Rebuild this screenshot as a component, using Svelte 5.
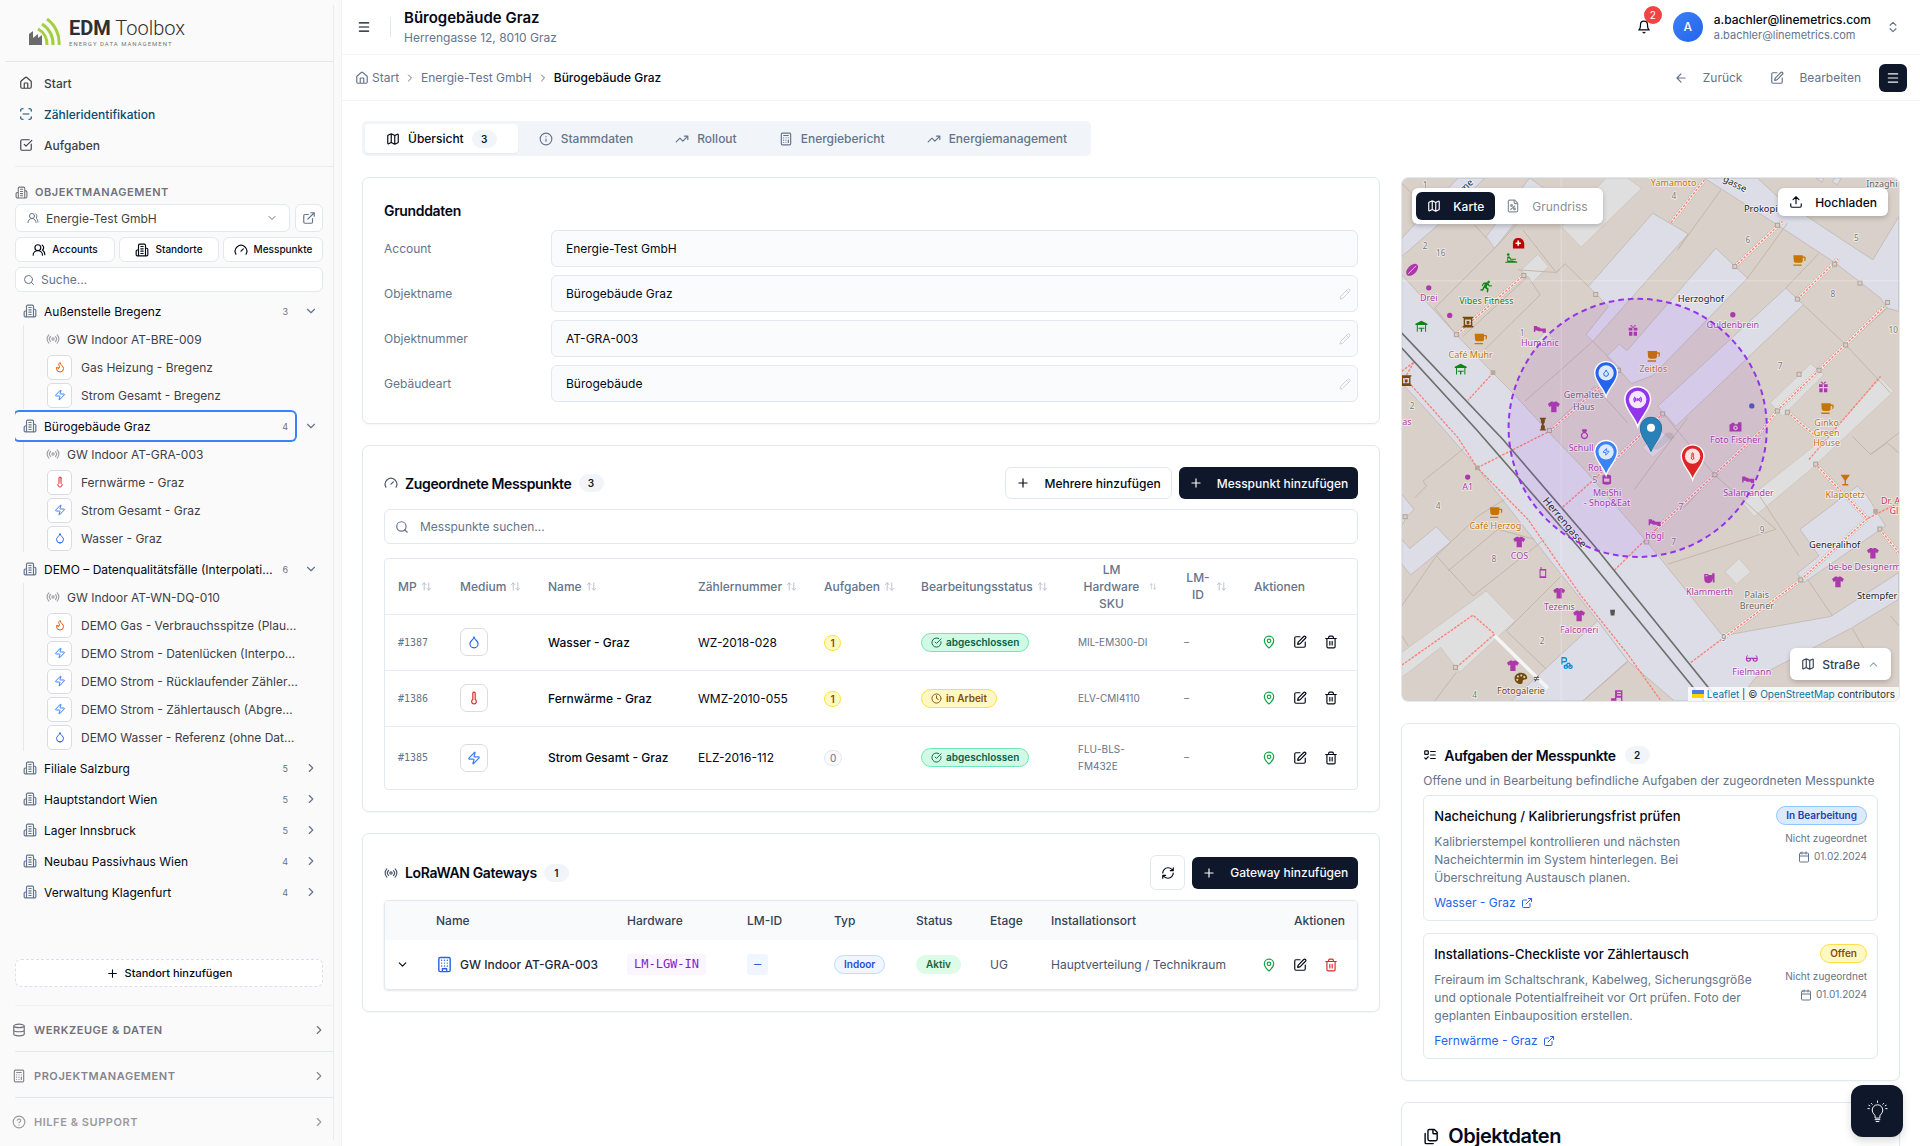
<script lang="ts">
	const icons: Record<string, string> = {
		home: 'M15 21v-8a1 1 0 0 0-1-1h-4a1 1 0 0 0-1 1v8M3 10a2 2 0 0 1 .709-1.528l7-5.999a2 2 0 0 1 2.582 0l7 5.999A2 2 0 0 1 21 10v9a2 2 0 0 1-2 2H5a2 2 0 0 1-2-2z',
		scan: 'M3 7V5a2 2 0 0 1 2-2h2M17 3h2a2 2 0 0 1 2 2v2M21 17v2a2 2 0 0 1-2 2h-2M7 21H5a2 2 0 0 1-2-2v-2M7 12h10',
		check: 'M21 10.5V19a2 2 0 0 1-2 2H5a2 2 0 0 1-2-2V5a2 2 0 0 1 2-2h12.5M9 11l3 3L22 4',
		site: 'M6 22V4a2 2 0 0 1 2-2h8a2 2 0 0 1 2 2v18ZM6 12H4a2 2 0 0 0-2 2v6a2 2 0 0 0 2 2h2M18 9h2a2 2 0 0 1 2 2v9a2 2 0 0 1-2 2h-2M10 6h4M10 10h4M10 14h4M10 18h4',
		users: 'M18 21a8 8 0 0 0-16 0M15 8a5 5 0 1 1-10 0a5 5 0 1 1 10 0M22 20c0-3.37-2-6.5-4-8a5 5 0 0 0-.45-8.3',
		external: 'M15 3h6v6M10 14 21 3M18 13v6a2 2 0 0 1-2 2H5a2 2 0 0 1-2-2V8a2 2 0 0 1 2-2h6',
		gauge: 'm12 14 4-4M3.34 19a10 10 0 1 1 17.32 0',
		search: 'M19 11a8 8 0 1 1-16 0a8 8 0 1 1 16 0M21 21l-4.3-4.3',
		radio: 'M4.9 19.1C1 15.2 1 8.8 4.9 4.9M7.8 16.2c-2.3-2.3-2.3-6.1 0-8.5M14 12a2 2 0 1 1-4 0a2 2 0 1 1 4 0M16.2 7.8c2.3 2.3 2.3 6.1 0 8.5M19.1 4.9C23 8.8 23 15.1 19.1 19',
		gas: 'M8.5 14.5A2.5 2.5 0 0 0 11 12c0-1.38-.5-2-1-3-1.072-2.143-.224-4.054 2-6 .5 2.5 2 4.9 4 6.5 2 1.6 3 3.5 3 5.5a7 7 0 1 1-14 0c0-1.153.433-2.294 1-3a2.5 2.5 0 0 0 2.5 2.5z',
		power: 'M4 14a1 1 0 0 1-.78-1.63l9.9-10.2a.5.5 0 0 1 .86.46l-1.92 6.02A1 1 0 0 0 13 10h7a1 1 0 0 1 .78 1.63l-9.9 10.2a.5.5 0 0 1-.86-.46l1.92-6.02A1 1 0 0 0 11 14z',
		heat: 'M14 4v10.54a4 4 0 1 1-4 0V4a2 2 0 0 1 4 0Z',
		water: 'M12 22a7 7 0 0 0 7-7c0-2-1-3.9-3-5.5s-3.5-4-4-6.5c-.5 2.5-2 4.9-4 6.5C6 11.1 5 13 5 15a7 7 0 0 0 7 7z',
		down: 'm6 9 6 6 6-6',
		up: 'm6 15 6-6 6 6',
		right: 'm9 18 6-6-6-6',
		plus: 'M5 12h14M12 5v14',
		database: 'M21 5a9 3 0 1 1-18 0a9 3 0 1 1 18 0M3 5V19A9 3 0 0 0 21 19V5M3 12A9 3 0 0 0 21 12',
		calculator: 'M6 2h12a2 2 0 0 1 2 2v16a2 2 0 0 1-2 2H6a2 2 0 0 1-2-2V4a2 2 0 0 1 2-2zM8 6h8M16 14v4M16 10h.01M12 10h.01M8 10h.01M12 14h.01M8 14h.01M12 18h.01M8 18h.01',
		help: 'M22 12a10 10 0 1 1-20 0a10 10 0 1 1 20 0M9.09 9a3 3 0 0 1 5.83 1c0 2-3 3-3 3M12 17h.01',
		menu: 'M4 12h16M4 5h16M4 19h16',
		bell: 'M6 8a6 6 0 0 1 12 0c0 7 3 9 3 9H3s3-2 3-9M10.3 21a1.94 1.94 0 0 0 3.4 0',
		updown: 'm7 15 5 5 5-5M7 9l5-5 5 5',
		left: 'm12 19-7-7 7-7M19 12H5',
		edit: 'M12 3H5a2 2 0 0 0-2 2v14a2 2 0 0 0 2 2h14a2 2 0 0 0 2-2v-7M18.375 2.625a1 1 0 0 1 3 3l-9.013 9.014a2 2 0 0 1-.853.505l-2.873.84a.5.5 0 0 1-.62-.62l.84-2.873a2 2 0 0 1 .506-.852z',
		map: 'M14.106 5.553a2 2 0 0 0 1.788 0l3.659-1.83A1 1 0 0 1 21 4.619v12.764a1 1 0 0 1-.553.894l-4.553 2.277a2 2 0 0 1-1.788 0l-4.212-2.106a2 2 0 0 0-1.788 0l-3.659 1.83A1 1 0 0 1 3 19.381V6.618a1 1 0 0 1 .553-.894l4.553-2.277a2 2 0 0 1 1.788 0zM15 5.764v15M9 3.236v15',
		info: 'M22 12a10 10 0 1 1-20 0a10 10 0 1 1 20 0M12 16v-4M12 8h.01',
		trend: 'M22 7l-8.5 8.5-5-5L2 17M16 7h6v6',
		pencil: 'M21.174 6.812a1 1 0 0 0-3.986-3.987L3.842 16.174a2 2 0 0 0-.5.83l-1.321 4.352a.5.5 0 0 0 .623.622l4.353-1.32a2 2 0 0 0 .83-.497zM15 5l4 4',
		sort: 'M7 20V4M3 8l4-4 4 4M17 4v16M21 16l-4 4-4-4',
		done: 'M21.801 10A10 10 0 1 1 17 3.335M9 11l3 3L22 4',
		clock: 'M22 12a10 10 0 1 1-20 0a10 10 0 1 1 20 0M12 6v6l4 2',
		pin: 'M20 10c0 4.993-5.539 10.193-7.399 11.799a1 1 0 0 1-1.202 0C9.539 20.193 4 14.993 4 10a8 8 0 0 1 16 0M15 10a3 3 0 1 1-6 0a3 3 0 1 1 6 0',
		trash: 'M3 6h18M19 6v14c0 1-1 2-2 2H7c-1 0-2-1-2-2V6M8 6V4c0-1 1-2 2-2h4c1 0 2 1 2 2v2M10 11v6M14 11v6',
		refresh: 'M3 12a9 9 0 0 1 9-9 9.75 9.75 0 0 1 6.74 2.74L21 8M21 3v5h-5M21 12a9 9 0 0 1-9 9 9.75 9.75 0 0 1-6.74-2.74L3 16M8 16H3v5',
		building: 'M6 2h12a2 2 0 0 1 2 2v16a2 2 0 0 1-2 2H6a2 2 0 0 1-2-2V4a2 2 0 0 1 2-2zM9 22v-4h6v4M8 6h.01M16 6h.01M12 6h.01M12 10h.01M12 14h.01M16 10h.01M16 14h.01M8 10h.01M8 14h.01',
		upload: 'M21 15v4a2 2 0 0 1-2 2H5a2 2 0 0 1-2-2v-4M17 8l-5-5-5 5M12 3v12',
		plan: 'M15 2H6a2 2 0 0 0-2 2v16a2 2 0 0 0 2 2h12a2 2 0 0 0 2-2V7zM14 2v4a2 2 0 0 0 2 2h4M8 18l7-6M11 11a1.500 1.500 0 1 1-3 0a1.500 1.500 0 1 1 3 0M16 17a1.500 1.500 0 1 1-3 0a1.500 1.500 0 1 1 3 0',
		todo: 'M4 5h4a1 1 0 0 1 1 1v4a1 1 0 0 1-1 1H4a1 1 0 0 1-1-1V6a1 1 0 0 1 1-1zM3 17l2 2 4-4M13 6h8M13 12h8M13 18h8',
		calendar: 'M8 2v4M16 2v4M3 10h18M5 4h14a2 2 0 0 1 2 2v14a2 2 0 0 1-2 2H5a2 2 0 0 1-2-2V6a2 2 0 0 1 2-2z',
		files: 'M14 2v5a1 1 0 0 0 1 1h5M9 18a2 2 0 0 1-2-2V4a2 2 0 0 1 2-2h7l4 4v10a2 2 0 0 1-2 2ZM3 7.600v12.800A1.600 1.600 0 0 0 4.600 22h9.800',
		bulb: 'M9.500 18.500v-2c0-1-3-2.500-3-6a5.500 5.500 0 0 1 11 0c0 3.500-3 5-3 6v2zM9.500 20.500h5M10.500 22.500h3M12 1v1.500M5.500 3.500l1 1M18.500 3.500l-1 1M2 9h1.500M20.500 9H22M3 5.500l1 .5M21 5.500l-1 .5'
	};

	const nav = [
		{ icon: 'home', label: 'Start' },
		{ icon: 'scan', label: 'Zähleridentifikation', active: true },
		{ icon: 'check', label: 'Aufgaben' }
	];

	const shortcuts = [
		{ icon: 'users', label: 'Accounts' },
		{ icon: 'site', label: 'Standorte' },
		{ icon: 'gauge', label: 'Messpunkte' }
	];

	let sites = $state([
		{
			name: 'Außenstelle Bregenz',
			count: 3,
			open: true,
			gateway: 'GW Indoor AT-BRE-009',
			meters: [
				{ type: 'gas', name: 'Gas Heizung - Bregenz' },
				{ type: 'power', name: 'Strom Gesamt - Bregenz' }
			]
		},
		{
			name: 'Bürogebäude Graz',
			count: 4,
			open: true,
			gateway: 'GW Indoor AT-GRA-003',
			meters: [
				{ type: 'heat', name: 'Fernwärme - Graz' },
				{ type: 'power', name: 'Strom Gesamt - Graz' },
				{ type: 'water', name: 'Wasser - Graz' }
			]
		},
		{
			name: 'DEMO – Datenqualitätsfälle (Interpolation)',
			count: 6,
			open: true,
			gateway: 'GW Indoor AT-WN-DQ-010',
			meters: [
				{ type: 'gas', name: 'DEMO Gas - Verbrauchsspitze (Plausibilität)' },
				{ type: 'power', name: 'DEMO Strom - Datenlücken (Interpolation)' },
				{ type: 'power', name: 'DEMO Strom - Rücklaufender Zählerstand' },
				{ type: 'power', name: 'DEMO Strom - Zählertausch (Abgrenzung)' },
				{ type: 'water', name: 'DEMO Wasser - Referenz (ohne Datenfehler)' }
			]
		},
		{ name: 'Filiale Salzburg', count: 5, open: false, gateway: '', meters: [] },
		{ name: 'Hauptstandort Wien', count: 5, open: false, gateway: '', meters: [] },
		{ name: 'Lager Innsbruck', count: 5, open: false, gateway: '', meters: [] },
		{ name: 'Neubau Passivhaus Wien', count: 4, open: false, gateway: '', meters: [] },
		{ name: 'Verwaltung Klagenfurt', count: 4, open: false, gateway: '', meters: [] }
	]);
	let selected = $state('Bürogebäude Graz');

	const sections = [
		{ icon: 'database', label: 'Werkzeuge & Daten' },
		{ icon: 'calculator', label: 'Projektmanagement' },
		{ icon: 'help', label: 'Hilfe & Support' }
	];

	const tabs = [
		{ icon: 'map', label: 'Übersicht', count: 3 },
		{ icon: 'info', label: 'Stammdaten' },
		{ icon: 'trend', label: 'Rollout' },
		{ icon: 'calculator', label: 'Energiebericht' },
		{ icon: 'trend', label: 'Energiemanagement' }
	];
	let tab = $state('Übersicht');

	const fields = [
		{ id: 'account', label: 'Account', value: 'Energie-Test GmbH', locked: true },
		{ id: 'name', label: 'Objektname', value: 'Bürogebäude Graz' },
		{ id: 'number', label: 'Objektnummer', value: 'AT-GRA-003' },
		{ id: 'kind', label: 'Gebäudeart', value: 'Bürogebäude' }
	];

	const columns = ['MP', 'Medium', 'Name', 'Zählernummer', 'Aufgaben', 'Bearbeitungsstatus', 'LM Hardware SKU', 'LM-ID'];

	const points = [
		{ id: '#1387', type: 'water', name: 'Wasser - Graz', number: 'WZ-2018-028', tasks: 1, done: true, sku: 'MIL-EM300-DI' },
		{ id: '#1386', type: 'heat', name: 'Fernwärme - Graz', number: 'WMZ-2010-055', tasks: 1, done: false, sku: 'ELV-CMI4110' },
		{ id: '#1385', type: 'power', name: 'Strom Gesamt - Graz', number: 'ELZ-2016-112', tasks: 0, done: true, sku: 'FLU-BLS-FM432E' }
	];

	const tasks = [
		{
			title: 'Nacheichung / Kalibrierungsfrist prüfen',
			text: 'Kalibrierstempel kontrollieren und nächsten Nacheichtermin im System hinterlegen. Bei Überschreitung Austausch planen.',
			link: 'Wasser - Graz',
			state: 'In Bearbeitung',
			tone: 'blue',
			date: '01.02.2024'
		},
		{
			title: 'Installations-Checkliste vor Zählertausch',
			text: 'Freiraum im Schaltschrank, Kabelweg, Sicherungsgröße und optionale Potentialfreiheit vor Ort prüfen. Foto der geplanten Einbauposition erstellen.',
			link: 'Fernwärme - Graz',
			state: 'Offen',
			tone: 'yellow',
			date: '01.01.2024'
		}
	];

	// Map geometry, drawn in the coordinates of the map's viewBox
	const streets = [
		'21,315 185,495 295,610 350,665 460,785 570,900 760,1120 985,1400 1310,1342 1515,1210 1515,1290 1370,1378 1085,1525 1030,1596 840,1596 700,1475 610,1355 248,895 130,760 21,640',
		'21,205 190,24 270,24 130,165 21,260',
		'275,200 405,24 445,52 300,236',
		'775,130 882,192 595,515 575,495 642,410 582,350',
		'965,235 1060,325 775,618 712,642 637,560 675,523 698,543',
		'1175,355 1228,405 845,770 790,710',
		'930,24 1090,24 1150,80 1300,180 1437,270 1515,140 1515,425 1480,415 1460,385 1325,280 1150,165',
		'1218,1080 1390,950 1420,980 1475,1070 1230,1240 1210,1212 1275,1160',
		'21,975 58,1020 35,1043 21,1068',
		'21,1110 45,1138 125,1072 168,1118 48,1217 21,1185',
		'350,1596 430,1520 610,1355 700,1475 565,1596',
		'1265,24 1285,36 1290,24',
		'1315,36 1330,44 1342,24 1322,24'
	];
	const yards = [
		'500,170 635,24 700,24 742,55 560,232',
		'380,300 430,253 462,290 410,342',
		'1128,700 1250,582 1290,615 1165,740',
		'1460,625 1500,665 1250,900 1080,1042 1045,1000 1310,790',
		'992,1208 1035,1168 1070,1208 1027,1245',
		'745,835 795,780 832,812 775,864',
		'21,1450 275,1265 362,1355 195,1510 138,1435 21,1525',
		'430,510 455,485 475,505 450,532'
	];
	const walls = [
		'120,415 300,235 370,160',
		'120,415 185,495',
		'370,300 485,308 512,282 582,350',
		'205,500 400,320 437,375 270,540',
		'512,282 485,308 385,180',
		'21,40 60,80',
		'240,165 275,205',
		'980,60 850,240 882,192',
		'1060,325 1180,160',
		'1275,250 1175,355',
		'390,695 500,600 595,515',
		'595,515 680,600',
		'460,785 600,650 700,760',
		'805,730 960,915 870,1015',
		'960,915 1145,1080 820,1185',
		'880,745 720,960',
		'1228,405 1355,525 1490,670',
		'1355,525 1480,415',
		'1090,970 1215,1160',
		'1240,1230 1315,1340',
		'1375,800 1430,855 1515,790',
		'1430,855 1480,820 1515,850',
		'21,1310 125,1160 250,1040 330,990',
		'85,935 210,835',
		'125,1160 235,1280',
		'160,1205 310,1080 420,1110',
		'235,1280 450,1110',
		'335,1385 455,1500',
		'335,1385 500,1220',
		'21,1400 40,1430',
		'185,1510 120,1596',
		'1375,1378 1440,1490',
		'85,935 95,950 60,985',
		'700,1478 565,1596',
		'1490,1340 1515,1370'
	];
	const paths = [
		'830,158 932,28',
		'1022,290 1165,155',
		'1210,388 1332,268',
		'188,493 388,316',
		'465,785 672,602',
		'1090,800 1150,722 1275,602 1470,412',
		'1180,728 1265,800',
		'610,920 805,733',
		'785,1080 962,915 1100,785',
		'990,1405 1220,1232 1420,1048 1265,885',
		'1458,1080 1515,1150'
	];
	const walks = [
		'21,605 58,577 30,625 190,805 248,895 400,1050 560,1280 700,1455 800,1596',
		'295,610 220,692',
		'248,895 465,785',
		'505,1013 610,920',
		'660,1203 785,1080',
		'890,1480 990,1405',
		'1245,870 1460,620',
		'21,1488 235,1338 300,1395 185,1495',
		'1515,1000 1420,1048'
	];
	const posts = [
		[604, 374], [388, 317], [185, 495], [672, 602], [1022, 290], [1150, 166], [1322, 283], [1210, 388], [1398, 340], [1481, 398],
		[1355, 526], [1275, 602], [1215, 614], [1150, 724], [1180, 728], [805, 733], [962, 916], [1265, 884], [1458, 1079],
		[1220, 1232], [31, 1042], [182, 1495], [465, 783], [757, 1118]
	];
	const labels = [
		{ x: 838, y: 48, t: 'Yamamoto', c: 'food' },
		{ x: 102, y: 393, t: 'Drei', c: 'shop' },
		{ x: 275, y: 403, t: 'Vibes Fitness', c: 'green' },
		{ x: 228, y: 566, t: 'Café Muhr', c: 'food' },
		{ x: 436, y: 528, t: 'Humanic', c: 'shop' },
		{ x: 920, y: 396, t: 'Herzoghof', c: 'place' },
		{ x: 1016, y: 476, t: 'Guldenbrein', c: 'shop' },
		{ x: 777, y: 608, t: 'Zeitlos', c: 'food' },
		{ x: 568, y: 686, t: 'Gemaltes', c: 'grey' },
		{ x: 568, y: 720, t: 'Haus', c: 'grey' },
		{ x: 1298, y: 768, t: 'Ginko', c: 'food' },
		{ x: 1298, y: 799, t: 'Green', c: 'food' },
		{ x: 1298, y: 830, t: 'House', c: 'food' },
		{ x: 1024, y: 820, t: 'Foto Fischer', c: 'shop' },
		{ x: 560, y: 844, t: 'Schull', c: 'shop' },
		{ x: 602, y: 904, t: 'Rot', c: 'shop' },
		{ x: 638, y: 980, t: 'MeiShi', c: 'shop' },
		{ x: 638, y: 1011, t: '- Shop&Eat', c: 'shop' },
		{ x: 781, y: 1109, t: 'högl', c: 'shop' },
		{ x: 1063, y: 980, t: 'Salamander', c: 'shop' },
		{ x: 1354, y: 986, t: 'Klapotetz', c: 'food' },
		{ x: 1490, y: 1003, t: 'Dr. A', c: 'red' },
		{ x: 1500, y: 1034, t: 'Gl', c: 'red' },
		{ x: 219, y: 962, t: 'A1', c: 'shop' },
		{ x: 302, y: 1080, t: 'Café Herzog', c: 'food' },
		{ x: 375, y: 1169, t: 'COS', c: 'shop' },
		{ x: 495, y: 1323, t: 'Tezenis', c: 'shop' },
		{ x: 554, y: 1391, t: 'Falconeri', c: 'shop' },
		{ x: 946, y: 1277, t: 'Klammerth', c: 'shop' },
		{ x: 1088, y: 1287, t: 'Palais', c: 'grey' },
		{ x: 1088, y: 1321, t: 'Breuner', c: 'grey' },
		{ x: 1322, y: 1135, t: 'Generalihof', c: 'place' },
		{ x: 1412, y: 1203, t: 'be-be Designerm', c: 'shop' },
		{ x: 1450, y: 1288, t: 'Stempfer', c: 'place' },
		{ x: 1073, y: 1519, t: 'Fielmann', c: 'shop' },
		{ x: 379, y: 1576, t: 'Fotogalerie', c: 'brown' },
		{ x: 36, y: 766, t: 'as', c: 'shop' },
		{ x: 1464, y: 50, t: 'Inzaghi', c: 'grey' },
		{ x: 1100, y: 125, t: 'Prokopi', c: 'place' },
		{ x: 91, y: 53, t: '1', c: 'num' },
		{ x: 91, y: 236, t: '2', c: 'num' },
		{ x: 138, y: 258, t: '16', c: 'num' },
		{ x: 839, y: 88, t: '4', c: 'num' },
		{ x: 1061, y: 220, t: '6', c: 'num' },
		{ x: 1387, y: 213, t: '5', c: 'num' },
		{ x: 1317, y: 382, t: '8', c: 'num' },
		{ x: 1158, y: 598, t: '7', c: 'num' },
		{ x: 1498, y: 490, t: '10', c: 'num' },
		{ x: 383, y: 498, t: '1', c: 'num' },
		{ x: 52, y: 719, t: '2', c: 'num' },
		{ x: 130, y: 1018, t: '4', c: 'num' },
		{ x: 298, y: 1178, t: '8', c: 'num' },
		{ x: 601, y: 941, t: '5', c: 'num' },
		{ x: 838, y: 1128, t: '7', c: 'num' },
		{ x: 860, y: 1022, t: '7', c: 'num' },
		{ x: 1104, y: 1092, t: '9', c: 'num' },
		{ x: 988, y: 1415, t: '9', c: 'num' },
		{ x: 443, y: 1425, t: '2', c: 'num' },
		{ x: 240, y: 1588, t: '4', c: 'num' }
	];
	// Glyphs of about 32 x 32 units, centred on their point
	const glyphs: Record<string, string> = {
		cup: 'M-17-16H11v4h5a4 4 0 0 1 4 4v4a6 6 0 0 1-6 6h-3a7 7 0 0 1-6 5h-13a8 8 0 0 1-8-8zM11-8V2h2a3 3 0 0 0 3-3v-7zM-17 12H8v4h-25z',
		shirt: 'M-8-16h5q3 5 6 0h5l10 7-5 9-5-3v19H-8V-3l-5 3-5-9z',
		gift: 'M-13-8h11v8h-11zM2-8h11v8H2zM-12 4h10v12h-10zM2 4h10v12H2zM-8-16q6 0 8 7q2-7 8-7v3q-4 1-6 5h-4q-2-4-6-5z',
		shoe: 'M-18-11h9l3 4 3-1 6 4h15v13H8V5H-4L-8 2h-6v5h-4z',
		gazebo: 'M0-17l18 9v4h-36v-4zM-14-4h3v20h-3zM11-4h3v20h-3zM-9 4H9v3H2v9h-4V7h-7z',
		glass: 'M-14-16h28L2 1v11h7v4H-9v-4h7V1z',
		camera: 'M-18-10h5l2-4h7l2 4h8l3-6h9v28h-36zM0-6a7 7 0 1 0 .1 0zM0-2a3 3 0 1 1-.1 0z',
		run: 'M6-18a4 4 0 1 1-.1 0zM-10-11l10-2 6 4 3 6 7-1v3l-9 1-4-5-3 7 6 5-2 11-4-1 1-8-7-5-5 9-8-1v-3l6-1 8-16-4 1-3 6-3-1z',
		person: 'M-9-16a4 4 0 1 1-.1 0zM-12-5l6-2 6 8 14 0v3H-2l-6-6-2 8H4l14 4v3h-36v-3h6z',
		ring: 'M-6-16h12l2 5-4 4a11 11 0 1 1-8 0l-4-4zM0-4a7 7 0 1 0 .1 0z',
		phone: 'M-10-11h3v-6h3v6h14v27h-20zM-7-6V11H7V-6z',
		bag: 'M-13-12q13-8 26 0V12q-13 6-26 0zM-8-4V6H8V-4z',
		jug: 'M-16-14h12v3h12v-5h7v28h-5V0q-2 14-14 14T-16 0zM-12-10v3h6v-3z',
		specs: 'M-18-2q0-8 6-10v3q-3 2-3 5h12q3-2 6 0h12q0-3-3-5v-3q6 2 6 10q0 10-8 10t-8-9h-4q0 9-8 9t-8-10zM-14 0q0 5 4 5t4-5zM6 0q0 5 4 5t4-5z',
		palette: 'M0-17c10 0 19 7 19 15c0 6-8 5-12 7c-4 3 1 12-7 12c-10 0-19-7-19-17S-10-17 0-17M-9-9a3 3 0 1 0 .1 0zM1-12a3 3 0 1 0 .1 0zM10-7a3 3 0 1 0 .1 0zM-11 1a3 3 0 1 0 .1 0z',
		coffee: 'M-16-16h32v4h-3v24h3v4h-32v-4h3v-24h-3zM-9-8V8H9V-8zM-4-3H4V4q-4 3-8 0z',
		shelf: 'M-18 8h12V-16h22v32h-4V6H-2v9h-16zM0-12v4h12v-4zM0-4v4h12v-4z'
	};
	const poi = [
		['cup', 257, 508, 'food'], ['cup', 1215, 272, 'food'], ['cup', 777, 560, 'food'], ['cup', 1299, 717, 'food'], ['cup', 303, 1030, 'food'],
		['gazebo', 80, 470, 'green'], ['gazebo', 198, 599, 'green'], ['run', 276, 350, 'green'], ['person', 350, 266, 'green'],
		['shoe', 436, 480, 'shop'], ['shoe', 1062, 932, 'shop'], ['shoe', 781, 1061, 'shop'],
		['gift', 716, 482, 'shop'], ['gift', 1288, 652, 'shop'],
		['shirt', 478, 712, 'shop'], ['shirt', 374, 1118, 'shop'], ['shirt', 494, 1272, 'shop'], ['shirt', 554, 1340, 'shop'],
		['shirt', 355, 1490, 'shop'], ['shirt', 1437, 1152, 'shop'], ['shirt', 1332, 1238, 'shop'],
		['glass', 1354, 932, 'food'], ['camera', 1024, 774, 'shop'], ['ring', 570, 795, 'shop'], ['phone', 445, 1210, 'shop'],
		['bag', 637, 931, 'shop'], ['jug', 946, 1228, 'shop'], ['specs', 1073, 1470, 'shop'], ['palette', 379, 1528, 'brown'],
		['coffee', 220, 457, 'brown'], ['coffee', 34, 633, 'brown'], ['shelf', 668, 1580, 'shop']
	] as const;
	const markers = [
		{ x: 635, y: 610, color: '#2563eb', light: '#dbeafe', icon: 'water', s: 1 },
		{ x: 635, y: 847, color: '#3b82f6', light: '#dbeafe', icon: 'power', s: 1 },
		{ x: 895, y: 860, color: '#dc2626', light: '#fee2e2', icon: 'heat', s: 1 },
		{ x: 730, y: 690, color: '#9333ea', light: '#f3e8ff', icon: 'radio', s: 1.14 }
	];
</script>

{#snippet icon(name: string, size = 14)}
	<svg class="icon" width={size} height={size} viewBox="0 0 24 24" aria-hidden="true"><path d={icons[name]} /></svg>
{/snippet}

{#snippet actions(danger = false)}
	<div class="actions">
		<button class="plain ok" aria-label="Auf Karte zeigen">{@render icon('pin')}</button>
		<button class="plain" aria-label="Bearbeiten">{@render icon('edit')}</button>
		<button class="plain" class:danger aria-label="Löschen">{@render icon('trash')}</button>
	</div>
{/snippet}

<div class="app">
	<aside class="sidebar">
		<a class="logo" href="/">
			<svg width="32" height="28" viewBox="0 0 32 28" aria-hidden="true">
				<path d="M0 27V16l4-3v7l5-4v4l4-3v10z" fill="#6b6b6b" />
				<g fill="none" stroke="#a3cf3e" stroke-width="3">
					<path d="M9 11a17 17 0 0 1 9 16" />
					<path d="M13 6a23 23 0 0 1 11 21" />
					<path d="M18 1a29 29 0 0 1 12 26" />
				</g>
			</svg>
			<span class="brand">
				<span class="word"><b>EDM</b> Toolbox</span>
				<span class="tagline">ENERGY DATA MANAGEMENT</span>
			</span>
		</a>

		<nav class="nav">
			{#each nav as item}
				<a href="/" class:active={item.active}>{@render icon(item.icon)}{item.label}</a>
			{/each}
		</nav>

		<div class="objects">
			<h2>{@render icon('site', 13)}Objektmanagement</h2>
			<div class="account">
				<label class="select">
					{@render icon('users', 12)}
					<select aria-label="Account"><option>Energie-Test GmbH</option></select>
					{@render icon('down', 12)}
				</label>
				<button class="outline square" aria-label="Account öffnen">{@render icon('external')}</button>
			</div>
			<div class="shortcuts">
				{#each shortcuts as item}
					<button class="outline">{@render icon(item.icon)}{item.label}</button>
				{/each}
			</div>
			<label class="find">
				{@render icon('search', 12)}
				<input type="search" placeholder="Suche..." aria-label="Suche" />
			</label>

			<div class="tree">
				{#each sites as site}
					<div class="site">
						<button class="site-name" class:selected={selected === site.name} onclick={() => (selected = site.name)}>
							{@render icon('site')}
							<span class="cut">{site.name}</span>
							<small>{site.count}</small>
						</button>
						<button class="toggle" aria-label="Aufklappen" onclick={() => (site.open = !site.open)}>
							{@render icon(site.open ? 'down' : 'right')}
						</button>
					</div>
					{#if site.open}
						<ul>
							<li class="gateway">{@render icon('radio')}<span class="cut">{site.gateway}</span></li>
							{#each site.meters as meter}
								<li>
									<span class="medium {meter.type}">{@render icon(meter.type, 12)}</span>
									<span class="cut">{meter.name}</span>
								</li>
							{/each}
						</ul>
					{/if}
				{/each}
			</div>

			<button class="add">{@render icon('plus', 13)}Standort hinzufügen</button>
		</div>

		<div class="sections">
			{#each sections as section}
				<button>{@render icon(section.icon)}<span>{section.label}</span>{@render icon('right')}</button>
			{/each}
		</div>
	</aside>

	<main>
		<header class="top">
			<button class="plain" aria-label="Menü">{@render icon('menu')}</button>
			<div class="title">
				<h1>Bürogebäude Graz</h1>
				<p>Herrengasse 12, 8010 Graz</p>
			</div>
			<button class="plain bell" aria-label="Benachrichtigungen">{@render icon('bell')}<span class="alert">2</span></button>
			<button class="user">
				<span class="avatar">A</span>
				<span class="mail">
					<strong>a.bachler@linemetrics.com</strong>
					<span>a.bachler@linemetrics.com</span>
				</span>
				{@render icon('updown')}
			</button>
		</header>

		<div class="crumbs">
			<nav>
				<a href="/">{@render icon('home')}Start</a>
				{@render icon('right', 12)}
				<a href="/">Energie-Test GmbH</a>
				{@render icon('right', 12)}
				<span>Bürogebäude Graz</span>
			</nav>
			<button class="ghost">{@render icon('left')}Zurück</button>
			<button class="ghost">{@render icon('edit')}Bearbeiten</button>
			<button class="dark menu" aria-label="Aktionen">{@render icon('menu')}</button>
		</div>

		<div class="content">
			<div class="tabs" role="tablist">
				{#each tabs as item}
					<button role="tab" aria-selected={tab === item.label} onclick={() => (tab = item.label)}>
						{@render icon(item.icon)}{item.label}
						{#if item.count}<span class="count">{item.count}</span>{/if}
					</button>
				{/each}
			</div>

			<div class="grid">
				<div class="column wide">
					<section class="card">
						<h3>Grunddaten</h3>
						<div class="fields">
							{#each fields as field}
								<label for={field.id}>{field.label}</label>
								<div class="field">
									<input id={field.id} value={field.value} readonly={field.locked} />
									{#if !field.locked}{@render icon('pencil', 12)}{/if}
								</div>
							{/each}
						</div>
					</section>

					<section class="card">
						<div class="bar">
							{@render icon('gauge')}
							<h3>Zugeordnete Messpunkte</h3>
							<span class="count">3</span>
							<button class="outline big">{@render icon('plus')}Mehrere hinzufügen</button>
							<button class="dark big">{@render icon('plus')}Messpunkt hinzufügen</button>
						</div>
						<label class="find large">
							{@render icon('search', 14)}
							<input type="search" placeholder="Messpunkte suchen..." aria-label="Messpunkte suchen" />
						</label>
						<div class="frame">
							<table class="points">
								<colgroup>
									<col class="c62" /><col class="c88" /><col class="c150" /><col class="c126" /><col class="c97" />
									<col class="c157" /><col class="c106" /><col class="c70" /><col class="c119" />
								</colgroup>
								<thead>
									<tr>
										{#each columns as column}
											<th><button class="sort"><span>{column}</span>{@render icon('sort', 11)}</button></th>
										{/each}
										<th>Aktionen</th>
									</tr>
								</thead>
								<tbody>
									{#each points as point}
										<tr>
											<td class="id">{point.id}</td>
											<td><span class="medium large {point.type}">{@render icon(point.type, 14)}</span></td>
											<td class="name">{point.name}</td>
											<td>{point.number}</td>
											<td><span class="number" class:open={point.tasks}>{point.tasks}</span></td>
											<td>
												{#if point.done}
													<span class="badge mint">{@render icon('done', 11)}abgeschlossen</span>
												{:else}
													<span class="badge yellow">{@render icon('clock', 11)}in Arbeit</span>
												{/if}
											</td>
											<td class="sku">{point.sku}</td>
											<td class="sku">–</td>
											<td>{@render actions()}</td>
										</tr>
									{/each}
								</tbody>
							</table>
						</div>
					</section>

					<section class="card">
						<div class="bar">
							{@render icon('radio')}
							<h3>LoRaWAN Gateways</h3>
							<span class="count">1</span>
							<button class="outline reload" aria-label="Aktualisieren">{@render icon('refresh')}</button>
							<button class="dark big">{@render icon('plus')}Gateway hinzufügen</button>
						</div>
						<div class="frame shadow">
							<table class="gateways">
								<colgroup>
									<col class="c38" /><col class="c191" /><col class="c120" /><col class="c87" /><col class="c82" />
									<col class="c74" /><col class="c61" /><col class="c203" /><col class="c119" />
								</colgroup>
								<thead>
									<tr>
										<th></th>
										<th>Name</th>
										<th>Hardware</th>
										<th>LM-ID</th>
										<th>Typ</th>
										<th>Status</th>
										<th>Etage</th>
										<th>Installationsort</th>
										<th class="end">Aktionen</th>
									</tr>
								</thead>
								<tbody>
									<tr>
										<td class="expand"><button class="plain" aria-label="Details">{@render icon('down', 13)}</button></td>
										<td><span class="gw">{@render icon('building', 17)}GW Indoor AT-GRA-003</span></td>
										<td><code class="purple">LM-LGW-IN</code></td>
										<td><code class="sky">–</code></td>
										<td><span class="badge sky">Indoor</span></td>
										<td><span class="badge live">Aktiv</span></td>
										<td class="dim">UG</td>
										<td class="dim">Hauptverteilung / Technikraum</td>
										<td>{@render actions(true)}</td>
									</tr>
								</tbody>
							</table>
						</div>
					</section>
				</div>

				<div class="column">
					<section class="map">
						<svg viewBox="21 24 1494 1572" preserveAspectRatio="xMidYMid slice" role="img" aria-label="Karte">
							<rect x="0" y="0" width="1600" height="1700" fill="#d9d0c9" />
							{#each streets as points}<polygon class="street" {points} />{/each}
							{#each yards as points}<polygon class="yard" {points} />{/each}
							{#each walls as points}<polyline class="wall" {points} />{/each}
							<polyline points="300,1400 460,1558" stroke="#f5f5f5" stroke-width="11" fill="none" />
							{#each paths as points}
								<polyline class="path-edge" {points} />
								<polyline class="path" {points} />
								<polyline class="walk" {points} />
							{/each}
							{#each walks as points}<polyline class="walk" {points} />{/each}
							<g class="rails">
								<polyline points="21,490 325,810 600,1130 975,1596" />
								<polyline points="21,535 245,780 560,1142 905,1565 930,1596" />
							</g>
							{#each posts as [x, y]}<rect class="post" x={x - 6} y={y - 6} width="12" height="12" />{/each}
							<g fill="#b8a99a">
								<rect x="288" y="602" width="14" height="14" />
								<rect x="241" y="888" width="14" height="14" />
								<rect x="1438" y="1019" width="14" height="14" />
							</g>
							{#each poi as [name, x, y, tone]}
								<path class="poi {tone}" d={glyphs[name]} transform="translate({x} {y})" />
							{/each}
							<g class="poi shop">
								<circle cx="102" cy="354" r="8" />
								<circle cx="165" cy="437" r="8" />
								<circle cx="1016" cy="435" r="8" />
								<circle cx="219" cy="923" r="8" />
								<ellipse cx="52" cy="300" rx="22" ry="13" transform="rotate(-45 52 300)" />
							</g>
							<path d="M40 312l24-24" stroke="#d9d0c9" stroke-width="3" />
							<circle cx="1073" cy="709" r="8" fill="#4a5bb5" />
							<path d="M355 236v-14q0-18 16-18t18 18v14z" fill="#bf0000" />
							<path d="M371 212v16M363 220h16" stroke="#fff" stroke-width="5" />
							<path d="M436 745h18v4h-3v9l-4 6 4 6v9h3v4h-18v-4h3v-9l4-6-4-6v-9h-3z" fill="#734a08" />
							<path d="M647 1322h15l-2 17h-11z" fill="#555" />
							<g fill="none" stroke="#0092da" stroke-width="4">
								<path d="M502 1486v-20h8a6 6 0 0 1 0 12h-8" />
								<circle cx="514" cy="1493" r="5" />
								<circle cx="528" cy="1493" r="5" />
								<path d="M514 1493l5-10h6l3 10" />
							</g>
							<path d="M418 1525h16M418 1532h16M421 1538l10-18" stroke="#555" stroke-width="3" />
							{#each labels as label}
								<text class={label.c} x={label.x} y={label.y}>{label.t}</text>
							{/each}
							<text class="place" transform="translate(222 54) rotate(-43)">me</text>
							<text class="place" transform="translate(1018 50) rotate(28)">gasse</text>
							<text class="place road" transform="translate(503 1066) rotate(50)">Herrengasse</text>
							<path d="M500 0V1700M0 333H1600" stroke="#fff" stroke-opacity=".45" stroke-width="2" />
							<circle class="range" cx="730" cy="775" r="388" />
							<path d="M772 840l44-50q22-6 24 14l-48 36z" fill="#000" opacity=".09" />
							{#each markers as marker}
								<g transform="translate({marker.x} {marker.y}) scale({marker.s})">
									<path class="drop" d="M0 71C-8 44-34 26-34 0a34 34 0 0 1 68 0C34 26 8 44 0 71z" fill={marker.color} />
									<circle r="23" fill={marker.light} />
									<path class="mark" d={icons[marker.icon]} stroke={marker.color} transform="translate(-12 -12)" />
								</g>
								{#if marker.icon === 'heat'}
									<path d="M770 846C760 822 738 802 738 775a32 32 0 0 1 64 0C802 802 780 822 770 846z" fill="#2a81b8" stroke="#1f6fa3" stroke-width="3" />
									<circle cx="770" cy="775" r="12" fill="#fff" />
								{/if}
							{/each}
						</svg>
						<div class="switch">
							<button class="dark">{@render icon('map')}Karte</button>
							<button>{@render icon('plan')}Grundriss</button>
						</div>
						<button class="float upload">{@render icon('upload')}Hochladen</button>
						<button class="float layer">{@render icon('map')}Straße{@render icon('up', 13)}</button>
						<div class="credit">
							<svg width="12" height="8" viewBox="0 0 12 8" aria-hidden="true"><path fill="#4c7be1" d="M0 0h12v4H0z" /><path fill="#ffd500" d="M0 4h12v4H0z" /></svg>
							<a href="https://leafletjs.com">Leaflet</a> | © <a href="https://www.openstreetmap.org/copyright">OpenStreetMap</a> contributors
						</div>
					</section>

					<section class="card">
						<div class="task-head">
							{@render icon('todo')}
							<h3>Aufgaben der Messpunkte</h3>
							<span class="count">2</span>
						</div>
						<p class="hint">Offene und in Bearbeitung befindliche Aufgaben der zugeordneten Messpunkte</p>
						<div class="tasks">
							{#each tasks as task}
								<article>
									<div class="task-text">
										<h4>{task.title}</h4>
										<p>{task.text}</p>
										<a href="/">{task.link} {@render icon('external', 12)}</a>
									</div>
									<div class="task-meta">
										<span class="badge {task.tone}">{task.state}</span>
										<span>Nicht zugeordnet</span>
										<span class="date">{@render icon('calendar', 12)}{task.date}</span>
									</div>
								</article>
							{/each}
						</div>
					</section>

					<section class="card">
						<h2 class="data">{@render icon('files', 17)}Objektdaten</h2>
					</section>
				</div>
			</div>
		</div>
	</main>

	<button class="assist" aria-label="Hilfe">{@render icon('bulb', 23)}</button>
</div>

<style>
	:global(body) {
		background: #fafafa;
	}

	.app {
		display: flex;
		height: 100vh;
		overflow: hidden;
		font-family: Inter, 'Liberation Sans', sans-serif;
		font-size: 12px;
		line-height: 17px;
		color: #020817;
	}

	.app :global(*) {
		box-sizing: border-box;
	}

	h1,
	h2,
	h3,
	h4,
	p,
	ul {
		margin: 0;
		padding: 0;
		list-style: none;
	}

	button,
	input,
	select {
		margin: 0;
		padding: 0;
		border: 0;
		background: none;
		font: inherit;
		color: inherit;
		appearance: none;
	}

	button {
		display: flex;
		align-items: center;
		cursor: pointer;
	}

	input {
		min-width: 0;
		outline: none;
	}

	input::placeholder {
		color: #64748b;
		opacity: 1;
	}

	a {
		color: inherit;
		text-decoration: none;
	}

	.icon {
		flex: none;
		fill: none;
		stroke: currentColor;
		stroke-width: 2;
		stroke-linecap: round;
		stroke-linejoin: round;
	}

	/* Sidebar */
	.sidebar {
		flex: none;
		display: flex;
		flex-direction: column;
		width: 329px;
		margin: 5px 7px 6px 5px;
		border-right: 1px solid #e9eaee;
		color: #3f3f46;
	}

	.sidebar > :global(*) {
		flex: none;
	}

	.logo {
		display: flex;
		gap: 8px;
		height: 57px;
		padding: 13px 24px 0;
		border-bottom: 1px solid #e5e7eb;
	}

	.brand {
		display: flex;
		flex-direction: column;
		gap: 1px;
	}

	.word {
		font: 300 20px/21px Roboto, sans-serif;
		color: #2f2f2f;
	}

	.word b {
		font-weight: 700;
	}

	.tagline {
		font: 6px/8px Roboto, sans-serif;
		letter-spacing: 1px;
		color: #777;
	}

	.nav {
		display: flex;
		flex-direction: column;
		gap: 3px;
		margin-left: 10px;
		padding: 7px 0;
		border-bottom: 1px solid #ececf0;
		font-weight: 500;
	}

	.nav a {
		display: flex;
		align-items: center;
		gap: 11px;
		height: 28px;
		padding-left: 4px;
	}

	.nav .active {
		color: #0c4a6e;
	}

	.objects {
		display: flex;
		flex-direction: column;
		gap: 5px;
		margin-left: 10px;
		padding: 19px 10px 18px 0;
		border-bottom: 1px solid #f1f1f4;
	}

	.objects h2 {
		display: flex;
		align-items: center;
		gap: 7px;
		font-size: 11px;
		font-weight: 600;
		line-height: 13px;
		letter-spacing: 0.05em;
		text-transform: uppercase;
		color: #71717a;
	}

	.account {
		display: flex;
		gap: 5px;
	}

	.outline,
	.select,
	.find {
		border: 1px solid #e2e8f0;
		border-radius: 6px;
		background: #fff;
	}

	.select {
		display: flex;
		flex: 1;
		align-items: center;
		gap: 7px;
		height: 28px;
		padding: 0 11px;
		color: #64748b;
	}

	.select select {
		flex: 1;
		color: #3f3f46;
	}

	.square {
		justify-content: center;
		width: 28px;
		color: #64748b;
	}

	.shortcuts {
		display: grid;
		grid-template-columns: repeat(3, 1fr);
		gap: 4px;
	}

	.shortcuts button {
		justify-content: center;
		gap: 6px;
		height: 25px;
		font-size: 10px;
		font-weight: 500;
		color: #020817;
	}

	.find {
		display: flex;
		align-items: center;
		gap: 6px;
		height: 25px;
		padding: 0 7px;
		color: #64748b;
	}

	.find input {
		flex: 1;
	}

	.tree {
		display: flex;
		flex-direction: column;
		padding-bottom: 45px;
	}

	.site {
		display: flex;
		align-items: center;
		gap: 9px;
		margin-bottom: 3px;
	}

	.site:has(+ ul) {
		margin-bottom: 0;
	}

	.site-name {
		flex: 1;
		gap: 7px;
		min-width: 0;
		height: 28px;
		padding: 0 7px 0 8px;
		border-radius: 4px;
		color: #64748b;
		text-align: left;
	}

	.site-name .cut {
		flex: 1;
		color: #020817;
	}

	.site-name small {
		font-size: 9px;
	}

	.selected {
		box-shadow: 0 0 0 2px #3b82f6;
		clip-path: inset(-2px -2px -2px 0);
	}

	.cut {
		overflow: hidden;
		white-space: nowrap;
		text-overflow: ellipsis;
	}

	.toggle {
		justify-content: center;
		width: 14px;
		margin-right: 5px;
		color: #64748b;
	}

	.tree ul {
		margin: 0 25px 3px 8px;
		border-left: 1px solid #e5e7eb;
	}

	.tree li {
		display: flex;
		align-items: center;
		gap: 9px;
		height: 28px;
		padding-left: 23px;
	}

	.tree .gateway {
		gap: 7px;
		padding-left: 22px;
	}

	.gateway .icon {
		color: #a1a1aa;
	}

	.medium {
		display: flex;
		flex: none;
		align-items: center;
		justify-content: center;
		width: 25px;
		height: 25px;
		border: 1px solid #d9dce3;
		border-radius: 5px;
		background: #fff;
	}

	.medium.large {
		width: 28px;
		height: 28px;
		border-radius: 7px;
	}

	.gas {
		color: #ea580c;
	}

	.power {
		color: #3b82f6;
	}

	.heat {
		color: #dc2626;
	}

	.water {
		color: #2563eb;
	}

	.add {
		justify-content: center;
		gap: 6px;
		height: 28px;
		border: 1px dashed #dcdfe8;
		border-radius: 6px;
		background: #fff;
		font-size: 11px;
		font-weight: 500;
		color: #020817;
	}

	.sections {
		display: flex;
		flex-direction: column;
	}

	.sections button {
		gap: 8px;
		height: 46px;
		padding: 2px 7px 0 7px;
		background: linear-gradient(#e2e8f0, #e2e8f0) 10px 100% / 100% 1px no-repeat;
		font-size: 11px;
		font-weight: 600;
		letter-spacing: 0.05em;
		text-transform: uppercase;
		color: #71717a;
	}

	.sections button:nth-child(2) {
		color: #85858d;
	}

	.sections button:last-child {
		background: none;
		color: #9a9aa1;
	}

	.sections span {
		flex: 1;
		text-align: left;
	}

	/* Main area */
	main {
		display: flex;
		flex: 1;
		flex-direction: column;
		min-width: 0;
		border-left: 1px solid #f1f1f4;
		background: #fff;
	}

	.top {
		display: flex;
		flex: none;
		align-items: center;
		height: 55px;
		padding: 0 20px 0 15px;
		border-bottom: 1px solid #f1f5f9;
	}

	.title {
		flex: 1;
		margin-left: 19px;
		padding: 2px 0 0 14px;
		background: linear-gradient(#e2e8f0, #e2e8f0) 0 50% / 1px 20px no-repeat;
	}

	.title h1 {
		font-size: 15px;
		font-weight: 600;
		line-height: 20px;
	}

	.title p,
	.mail,
	.hint {
		color: #64748b;
	}

	.title p {
		line-height: 20px;
	}

	.bell {
		position: relative;
	}

	.alert {
		position: absolute;
		top: -14px;
		right: -11px;
		width: 18px;
		height: 18px;
		border-radius: 9px;
		background: #ef4444;
		font-size: 10px;
		line-height: 18px;
		text-align: center;
		color: #fff;
	}

	.user {
		gap: 11px;
		margin-left: 22px;
		color: #64748b;
		text-align: left;
	}

	.avatar {
		width: 30px;
		height: 30px;
		border-radius: 50%;
		background: linear-gradient(135deg, #3b82f6, #2563eb);
		line-height: 30px;
		text-align: center;
		font-weight: 500;
		color: #fff;
	}

	.mail {
		display: flex;
		flex-direction: column;
		margin-right: 4px;
		font-size: 11px;
		line-height: 14px;
	}

	.mail strong {
		font-size: 12px;
		font-weight: 500;
		line-height: 16px;
		color: #020817;
	}

	.crumbs {
		display: flex;
		flex: none;
		align-items: center;
		height: 46px;
		padding: 0 13px;
		border-bottom: 1px solid #f1f5f9;
		color: #64748b;
	}

	.crumbs nav,
	.crumbs nav a {
		display: flex;
		align-items: center;
		gap: 5px;
	}

	.crumbs nav {
		flex: 1;
	}

	.crumbs nav a {
		gap: 3px;
	}

	.crumbs nav span {
		font-weight: 500;
		color: #020817;
	}

	.ghost {
		gap: 15px;
		margin-right: 28px;
	}

	.ghost + .ghost {
		margin-right: 18px;
	}

	.dark {
		border-radius: 6px;
		background: #0f172a;
		font-weight: 500;
		color: #f8fafc;
	}

	.menu {
		justify-content: center;
		width: 28px;
		height: 28px;
	}

	.content {
		display: flex;
		flex: 1;
		flex-direction: column;
		align-items: flex-start;
		gap: 21px;
		min-height: 0;
		padding: 20px 20px 0;
		overflow-y: auto;
		scrollbar-width: none;
	}

	.tabs {
		display: flex;
		flex: none;
		height: 35px;
		padding: 3px;
		border-radius: 5px;
		background: #f1f5f9;
	}

	.tabs button {
		gap: 8px;
		padding: 0 21px;
		border-radius: 4px;
		font-weight: 500;
		color: #64748b;
	}

	.tabs button[aria-selected='true'] {
		background: #fff;
		box-shadow: 0 1px 2px #0000000d;
		color: #020817;
	}

	.count {
		min-width: 25px;
		height: 18px;
		border-radius: 9px;
		background: #f1f5f9;
		font-size: 10px;
		font-weight: 600;
		line-height: 18px;
		text-align: center;
		color: #0f172a;
	}

	.grid {
		display: grid;
		flex: none;
		grid-template-columns: repeat(3, minmax(0, 1fr));
		gap: 21px;
		align-items: start;
		width: 100%;
	}

	.column {
		display: flex;
		flex-direction: column;
		gap: 21px;
	}

	.wide {
		grid-column: span 2;
	}

	.card {
		padding: 21px;
		border: 1px solid #e2e8f0;
		border-radius: 7px;
		background: #fff;
		box-shadow: 0 1px 2px #0000000a;
	}

	.card h3 {
		font-size: 14px;
		font-weight: 600;
		line-height: 23px;
		letter-spacing: -0.025em;
	}

	.fields {
		display: grid;
		grid-template-columns: 167px 1fr;
		gap: 8px 0;
		align-items: center;
		margin-top: 8px;
		color: #64748b;
	}

	.field {
		display: flex;
		align-items: center;
		height: 37px;
		padding: 0 6px 0 14px;
		border: 1px solid #e2e8f0;
		border-radius: 6px;
		background: #fafbfd;
		color: #a3adbb;
	}

	.field input {
		flex: 1;
		color: #020817;
	}

	.field .icon {
		stroke-width: 1;
	}

	.bar {
		display: flex;
		align-items: center;
		gap: 7px;
		margin-bottom: 10px;
		color: #475569;
	}

	.bar h3 {
		color: #020817;
	}

	.bar .count + button {
		margin-left: auto;
	}

	.big {
		gap: 14px;
		height: 32px;
		padding: 0 10px;
		font-weight: 500;
	}

	.big.outline {
		color: #020817;
	}

	.reload {
		justify-content: center;
		width: 35px;
		height: 35px;
		color: #020817;
	}

	.find.large {
		gap: 11px;
		height: 35px;
		margin-bottom: 14px;
		padding: 0 10px;
	}

	.frame {
		border: 1px solid #e2e8f0;
		border-radius: 4px;
		overflow: hidden;
	}

	.frame.shadow {
		box-shadow: 0 1px 2px #0f172a1f;
	}

	table {
		width: 100%;
		border-collapse: collapse;
		table-layout: fixed;
	}

	th {
		height: 55px;
		padding: 0 0 0 13px;
		font-weight: 500;
		text-align: left;
		color: #64748b;
	}

	td {
		height: 56px;
		padding: 0 0 0 13px;
	}

	.points tbody tr {
		border-top: 1px solid #e8ecf2;
	}

	.points tbody tr:last-child td {
		height: 63px;
	}

	.c38 { width: 38px; }
	.c61 { width: 61px; }
	.c62 { width: 62px; }
	.c70 { width: 70px; }
	.c74 { width: 74px; }
	.c82 { width: 82px; }
	.c87 { width: 87px; }
	.c88 { width: 88px; }
	.c97 { width: 97px; }
	.c106 { width: 106px; }
	.c119 { width: 119px; }
	.c120 { width: 120px; }
	.c126 { width: 126px; }
	.c150 { width: 150px; }
	.c157 { width: 157px; }
	.c191 { width: 191px; }
	.c203 { width: 203px; }

	.sort {
		gap: 4px;
	}

	.sort .icon {
		color: #b6bfcc;
	}

	th:nth-child(7) .sort,
	th:nth-child(8) .sort {
		width: 100%;
		padding-right: 14px;
	}

	th:nth-child(7) .sort span,
	th:nth-child(8) .sort span {
		flex: 1;
	}

	th:nth-child(7) .sort .icon {
		width: 8px;
	}

	.id {
		font-family: 'DejaVu Sans Mono', monospace;
		font-size: 10px;
		color: #64748b;
	}

	.name {
		font-weight: 500;
	}

	.sku {
		padding-right: 20px;
		font-size: 10px;
		color: #64748b;
	}

	.number {
		display: inline-block;
		min-width: 17px;
		padding: 0 5px;
		border: 1px solid #e5e7eb;
		border-radius: 8px;
		background: #f9fafb;
		font-size: 10px;
		line-height: 14px;
		text-align: center;
		color: #6b7280;
	}

	.number.open {
		border-color: #fde047;
		background: #fef9c3;
		font-weight: 600;
		color: #854d0e;
	}

	.badge {
		display: inline-flex;
		align-items: center;
		gap: 4px;
		height: 19px;
		padding: 0 9px;
		border: 1px solid;
		border-radius: 10px;
		font-size: 10px;
		font-weight: 600;
		vertical-align: middle;
	}

	.badge.mint {
		border-color: #6ee7b7;
		background: #d1fae5;
		color: #065f46;
	}

	.badge.yellow {
		border-color: #fde047;
		background: #fef9c3;
		color: #854d0e;
	}

	.badge.blue {
		border-color: #93c5fd;
		background: #dbeafe;
		color: #1e40af;
	}

	.badge.sky {
		border-color: #bfdbfe;
		background: #eff6ff;
		color: #1d4ed8;
	}

	.badge.live {
		border-color: #dcfce7;
		background: #dcfce7;
		color: #166534;
	}

	.actions {
		display: flex;
		gap: 17px;
		justify-content: flex-end;
		padding-right: 22px;
		color: #020817;
	}

	.ok {
		color: #16a34a;
	}

	.danger {
		color: #dc2626;
	}

	.gateways th {
		height: 39px;
		background: #f8fafc;
		color: #334155;
	}

	.gateways td {
		height: 49px;
	}

	.gateways .end {
		padding-right: 15px;
		text-align: right;
	}

	.gateways .expand {
		padding-left: 11px;
	}

	.gw {
		display: flex;
		align-items: center;
		gap: 7px;
		font-weight: 500;
		color: #1e293b;
		white-space: nowrap;
	}

	.gw .icon {
		color: #2563eb;
	}

	code {
		display: inline-block;
		padding: 2px 7px;
		border-radius: 3px;
		font: 12px/17px 'DejaVu Sans Mono', monospace;
	}

	code.purple {
		background: #faf5ff;
		color: #7e22ce;
	}

	code.sky {
		background: #eff6ff;
		color: #1d4ed8;
	}

	.dim {
		color: #475569;
		white-space: nowrap;
	}

	/* Map */
	.map {
		position: relative;
		height: 525px;
		border: 1px solid #e2e8f0;
		border-radius: 7px;
		overflow: hidden;
	}

	.map > svg {
		display: block;
		width: 100%;
		height: 100%;
	}

	.street {
		fill: #dddde8;
		stroke: #b9b0aa;
		stroke-width: 2;
	}

	.yard {
		fill: #e0dfdf;
		stroke: #c9bfb6;
		stroke-width: 2;
	}

	.wall {
		fill: none;
		stroke: #c4b6ab;
		stroke-width: 3;
	}

	.path,
	.path-edge,
	.walk {
		fill: none;
		stroke: #f4efec;
		stroke-width: 9;
	}

	.path-edge {
		stroke: #aaa29c;
		stroke-width: 13;
		stroke-dasharray: 3 4;
	}

	.walk {
		stroke: #fa8072;
		stroke-width: 4;
		stroke-dasharray: 8 4;
	}

	.rails {
		fill: none;
		stroke: #6e6e6e;
		stroke-width: 5;
	}

	.post {
		fill: #d9d0c9;
		stroke: #b0a296;
		stroke-width: 3;
	}

	.poi {
		fill-rule: evenodd;
	}

	.shop {
		fill: #ac39ac;
	}

	.food {
		fill: #c77400;
	}

	.green {
		fill: #0d8517;
	}

	.brown {
		fill: #734a08;
	}

	.red {
		fill: #da2f4a;
	}

	.map text {
		font-family: 'Noto Sans', sans-serif;
		font-size: 27px;
		text-anchor: middle;
		paint-order: stroke;
		stroke: #ffffffa0;
		stroke-width: 5;
	}

	.map .place {
		font-size: 28px;
		fill: #222;
	}

	.map .road {
		font-size: 31px;
	}

	.map .grey {
		fill: #666;
	}

	.map .num {
		font-size: 25px;
		fill: #777;
	}

	.range {
		fill: #9333ea1a;
		stroke: #9333ea;
		stroke-width: 6;
		stroke-dasharray: 17 12;
	}

	.drop {
		stroke: #fff;
		stroke-width: 4;
	}

	.mark {
		fill: none;
		stroke-width: 3;
	}

	.switch {
		position: absolute;
		top: 10px;
		left: 10px;
		display: flex;
		padding: 4px;
		border-radius: 6px;
		background: #fff;
		box-shadow: 0 2px 5px #00000033;
	}

	.switch button {
		gap: 12px;
		height: 28px;
		padding: 0 11px;
		color: #8a8f98;
	}

	.switch .dark {
		color: #fff;
	}

	.float {
		position: absolute;
		right: 11px;
		gap: 12px;
		border-radius: 6px;
		background: #fff;
		box-shadow: 0 2px 5px #00000033;
		font-weight: 500;
	}

	.upload {
		top: 10px;
		height: 28px;
		padding: 0 11px;
	}

	.layer {
		right: 8px;
		bottom: 21px;
		gap: 7px;
		height: 32px;
		padding: 0 11px;
		color: #334155;
	}

	.layer .icon:last-child {
		color: #94a3b8;
	}

	.credit {
		position: absolute;
		right: 0;
		bottom: 0;
		padding: 0 4px;
		background: #ffffffcc;
		font-size: 10px;
		line-height: 14px;
		color: #333;
	}

	.credit a {
		color: #0078a8;
	}

	/* Tasks */
	.task-head {
		display: flex;
		align-items: center;
		gap: 7px;
		height: 20px;
	}

	.task-head .count {
		margin-left: 2px;
	}

	.hint {
		margin: 7px 0 6px;
		white-space: nowrap;
	}

	.tasks {
		display: flex;
		flex-direction: column;
		gap: 12px;
	}

	article {
		display: flex;
		justify-content: space-between;
		gap: 14px;
		padding: 10px 10px 9px;
		border: 1px solid #e2e8f0;
		border-radius: 6px;
	}

	.task-text {
		max-width: 320px;
	}

	h4 {
		font-size: 13px;
		font-weight: 500;
		line-height: 21px;
		white-space: nowrap;
	}

	article p {
		margin: 6px 0 7px;
		line-height: 18px;
		color: #64748b;
	}

	article a {
		display: flex;
		align-items: center;
		gap: 5px;
		color: #2563eb;
	}

	.task-meta {
		display: flex;
		flex-direction: column;
		align-items: flex-end;
		gap: 3px;
		font-size: 10px;
		line-height: 15px;
		color: #64748b;
		white-space: nowrap;
	}

	.task-meta .badge {
		margin-bottom: 3px;
	}

	.date {
		display: flex;
		align-items: center;
		gap: 4px;
	}

	.data {
		display: flex;
		align-items: center;
		gap: 8px;
		font-size: 20px;
		font-weight: 600;
		line-height: 24px;
		letter-spacing: -0.025em;
	}

	.assist {
		position: fixed;
		right: 17px;
		bottom: 9px;
		justify-content: center;
		width: 52px;
		height: 52px;
		border-radius: 12px;
		background: #0f172a;
		color: #fff;
		box-shadow: 0 4px 8px #00000026;
	}

	.assist .icon {
		stroke-width: 1;
	}
</style>
